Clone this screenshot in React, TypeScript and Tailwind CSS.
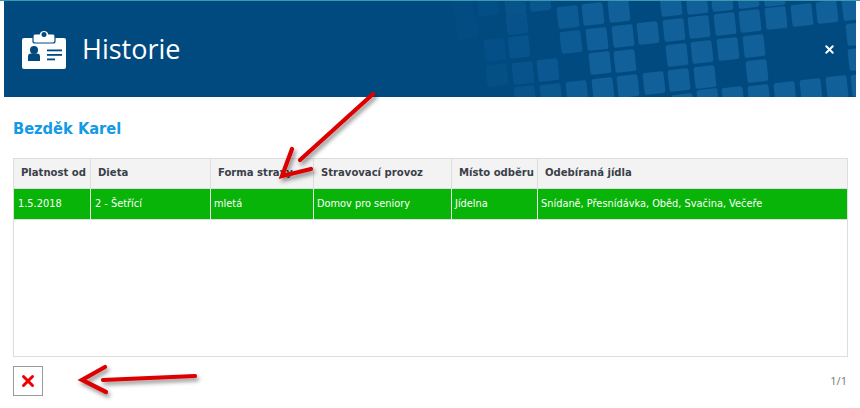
import { X } from "lucide-react";

const columns = [
  { title: "Platnost od", value: "1.5.2018", width: "w-[77px]", head: "pl-[7px]", cell: "pl-[4px]" },
  { title: "Dieta", value: "2 - Šetřící", width: "w-[120px]", head: "pl-[7px]", cell: "pl-[4px]" },
  { title: "Forma stravy", value: "mletá", width: "w-[103px]", head: "pl-[7px]", cell: "pl-[3px]" },
  { title: "Stravovací provoz", value: "Domov pro seniory", width: "w-[138px]", head: "pl-[7px]", cell: "pl-[3px]" },
  { title: "Místo odběru", value: "Jídelna", width: "w-[86px]", head: "pl-[7px]", cell: "pl-[3px]" },
  { title: "Odebíraná jídla", value: "Snídaně, Přesnídávka, Oběd, Svačina, Večeře", width: "flex-1", head: "pl-[7px]", cell: "pl-[3px]" },
];

// [x, y] centres of the background tiles
const tiles = [
  [463, 7], [488, 5], [515, 2], [540, 0], [467, 28],
  [517, 23], [568, 17], [593, 14], [619, 11], [671, 5], [697, 3], [722, 0], [748, -3], [774, -5],
  [519, 47], [495, 50], [571, 42], [597, 39], [623, 36], [648, 33], [674, 30], [699, 27], [725, 24], [750, 21], [776, 18], [802, 15], [827, 12], [853, 9],
  [497, 75], [523, 73], [548, 70], [600, 63], [625, 61], [677, 55], [702, 52], [728, 49], [754, 46], [857, 34],
  [525, 97], [551, 95], [577, 92], [603, 89], [628, 86], [654, 83], [679, 80], [705, 77], [757, 71], [859, 59],
  [683, 105], [708, 100], [733, 98], [759, 96], [785, 93], [811, 90], [837, 87], [862, 85],
];

function CardIcon() {
  return (
    <svg width="44" height="40" viewBox="0 0 44 40">
      <rect x="0" y="9" width="44" height="31" rx="2" fill="white" />
      <path
        d="M13 5h4.200a5 5 0 0 1 9.600 0H31a2 2 0 0 1 2 2v5a2 2 0 0 1-2 2H13a2 2 0 0 1-2-2V7a2 2 0 0 1 2-2Z"
        fill="white"
        stroke="#004a80"
        strokeWidth="1.200"
      />
      <g fill="#004a80">
        <circle cx="22" cy="5.500" r="2.500" />
        <circle cx="12" cy="21" r="4" />
        <path d="M6 32v-4.500a3 3 0 0 1 3-3h6a3 3 0 0 1 3 3V32Z" />
        <rect x="25" y="20.500" width="15" height="1.800" />
        <rect x="25" y="25" width="15" height="1.800" />
        <rect x="25" y="29.500" width="8" height="1.800" />
      </g>
    </svg>
  );
}

function Arrows() {
  return (
    <svg className="absolute top-0 left-0 pointer-events-none" width="860" height="408" fill="none">
      <defs>
        <filter id="arrowShadow" x="-20%" y="-20%" width="150%" height="150%">
          <feDropShadow dx="2" dy="3" stdDeviation="2" floodColor="#000" floodOpacity="0.45" />
        </filter>
      </defs>
      <g stroke="#dc0000" strokeWidth="4.200" strokeLinecap="round" strokeLinejoin="miter" filter="url(#arrowShadow)">
        <path d="M373 94 300 160" />
        <path d="M292 149 282 176 311 169" />
        <path d="M103 380 195 376" />
        <path d="M105 367 82 380 106 392" />
      </g>
    </svg>
  );
}

export default function App() {
  return (
    <div className="relative w-[860px] h-[408px] bg-white overflow-hidden font-['Noto_Sans',sans-serif]">
      <div className="h-px bg-[#3a9bb0]" />

      {/* ── Header ── */}
      <header className="relative mx-1 h-[96px] bg-[#004a80] overflow-hidden flex items-center text-white">
        <svg className="absolute top-[-1px] left-[-4px]" width="860" height="97">
          {tiles.map(([x, y]) => (
            <rect
              key={`${x}-${y}`}
              x={x - 10.5}
              y={y - 11}
              width="21"
              height="22"
              rx="2.5"
              fill="#11609a"
              fillOpacity={Math.min(1, Math.max(0.1, (x - 460) / 140))}
              transform={`rotate(-6 ${x} ${y})`}
            />
          ))}
        </svg>
        <div className="relative ml-[18px]">
          <CardIcon />
        </div>
        <h1 className="relative ml-[16px] font-['Open_Sans',sans-serif] text-[27px]">Historie</h1>
        <X className="absolute right-[20px] top-[42px]" size={13} strokeWidth={3.5} />
      </header>

      <h2 className="mt-[22px] ml-[13px] h-[20px] font-['DejaVu_Sans_Condensed','DejaVu_Sans',sans-serif] font-bold text-[16.300px] leading-[20px] text-[#139ae6]">
        Bezděk Karel
      </h2>

      {/* ── Table ── */}
      <div className="mt-[19px] mx-[13px] w-[835px] h-[199px] border border-[#dddddd]">
        <div className="flex h-[30px] bg-[#f3f3f3] border-b border-[#dddddd]">
          {columns.map((c) => (
            <div key={c.title} className={`${c.width} ${c.head} flex items-center border-r last:border-r-0 border-[#dddddd] font-['DejaVu_Sans_Condensed','DejaVu_Sans',sans-serif] text-[11.200px] font-bold text-[#3a3f4a] whitespace-nowrap`}>
              {c.title}
            </div>
          ))}
        </div>
        <div className="flex h-[31px] bg-[#08b408] border-b border-[#dddddd]">
          {columns.map((c) => (
            <div key={c.title} className={`${c.width} ${c.cell} flex items-center border-r last:border-r-0 border-[#e8f6e8] font-['DejaVu_Sans_Condensed','DejaVu_Sans',sans-serif] text-[10.900px] text-white whitespace-nowrap`}>
              {c.value}
            </div>
          ))}
        </div>
      </div>

      {/* ── Footer ── */}
      <div className="mt-[9px] mx-[13px] w-[834px] flex items-center justify-between">
        <button className="w-[30px] h-[30px] border border-[#999999] flex items-center justify-center">
          <X className="text-[#f00000]" size={18} strokeWidth={4} />
        </button>
        <span className="text-[11px] text-[#808080] mt-[1px]">1/1</span>
      </div>

      <Arrows />
    </div>
  );
}
